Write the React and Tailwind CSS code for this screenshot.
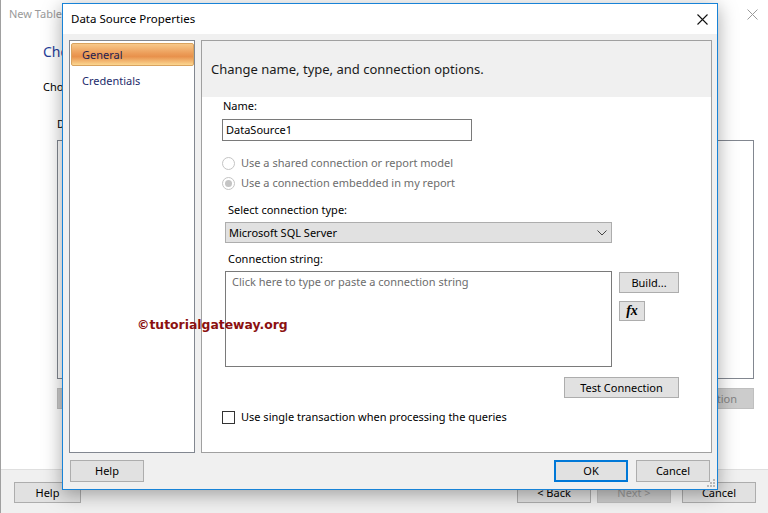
import React from "react";

const Btn = ({ children, className = "" }) => (
  <div className={"flex items-center justify-center bg-[#e1e1e1] border border-[#adadad] text-[11px] text-black " + className}>
    {children}
  </div>
);

const Radio = ({ checked, label }) => (
  <div className="flex items-center h-[20px]">
    <div className="w-[13px] h-[13px] rounded-full border border-[#c4c4c4] bg-white flex items-center justify-center">
      {checked && <div className="w-[7px] h-[7px] rounded-full bg-[#c4c4c4]" />}
    </div>
    <span className="ml-[6px] text-[11px] text-[#6d6d6d]">{label}</span>
  </div>
);

export default function App() {
  return (
    <div className="relative w-[768px] h-[513px] overflow-hidden bg-white font-['Noto_Sans',sans-serif] text-[11px] leading-[16px]">
      {/* Background wizard window */}
      <div className="flex flex-col w-full h-full border-l border-[#a0a0a0]">
        <div className="h-[28px] flex items-center justify-between pl-[8px] pr-[10px] text-[#9a9a9a]">
          <span>New Table or Matrix</span>
          <svg width="11" height="11" viewBox="0 0 11 11">
            <path d="M0.5 0.5 L10.5 10.5 M10.5 0.5 L0.5 10.5" stroke="#9a9a9a" strokeWidth="1" />
          </svg>
        </div>
        <div className="pl-[42px] mt-[14px] text-[14px] leading-[20px] text-[#1f3d99]">Choose a connection to a data source</div>
        <div className="pl-[42px] mt-[17px] text-black">Choose an existing data source or create a new one.</div>
        <div className="pl-[56px] mt-[21px] text-black">Data Source Connections</div>
        <div className="ml-[56px] mt-[8px] w-[697px] h-[239px] border border-[#828790] bg-white" />
        <div className="ml-[56px] mt-[9px] w-[697px] flex justify-between">
          <div className="w-[110px] h-[21px] bg-[#cccccc] border border-[#bfbfbf] text-[#838383] flex items-center justify-center">New</div>
          <div className="w-[110px] h-[21px] bg-[#cccccc] border border-[#bfbfbf] text-[#838383] flex items-center justify-end pr-[16px]">Test Connection</div>
        </div>
        <div className="mt-auto h-[44px] bg-[#f0f0f0] border-t border-[#dfdfdf] pt-[12px] flex">
          <Btn className="ml-[13px] w-[67px] h-[21px]">Help</Btn>
          <Btn className="ml-[436px] w-[74px] h-[21px]">&lt; Back</Btn>
          <div className="ml-[6px] w-[74px] h-[21px] bg-[#cccccc] border border-[#bfbfbf] text-[#9a9a9a] flex items-center justify-center">Next &gt;</div>
          <Btn className="ml-[11px] w-[74px] h-[21px]">Cancel</Btn>
        </div>
      </div>

      {/* Dialog window */}
      <div className="absolute left-[62px] top-[3px] w-[656px] h-[487px] border border-[#1883d7] bg-[#f0f0f0] shadow-[0_4px_18px_rgba(0,0,0,0.35)] flex flex-col">
        <div className="h-[30px] bg-white flex items-center justify-between pl-[8px] pr-[9px] shrink-0">
          <span className="text-black text-[11.5px]">Data Source Properties</span>
          <svg width="11" height="11" viewBox="0 0 11 11">
            <path d="M0.5 0.5 L10.5 10.5 M10.5 0.5 L0.5 10.5" stroke="#111" strokeWidth="1.1" />
          </svg>
        </div>
        <div className="flex flex-col pl-[6px] pr-[5px] pt-[6px]">
          <div className="flex gap-[6px]">
            {/* Nav */}
            <div className="w-[126px] h-[413px] border border-[#828790] bg-white pt-[2px]">
              <div className="ml-[1px] w-[123px] h-[23px] border border-[#d9a35f] rounded-[2px] bg-[linear-gradient(to_bottom,#f7c88a_0%,#ec9c58_45%,#e8914c_60%,#fbd690_100%)] flex items-center pl-[10px] text-[#1c2050]">
                General
              </div>
              <div className="mt-[3px] h-[23px] flex items-center pl-[12px] text-[#1c2b6b]">Credentials</div>
            </div>
            {/* Right panel */}
            <div className="w-[511px] h-[413px] border border-[#a0a0a0] bg-white flex flex-col">
              <div className="h-[56px] bg-[#f0f0f0] flex items-center pl-[9px] text-[13px] text-[#1a1a1a]">
                Change name, type, and connection options.
              </div>
              <div className="pl-[20px] flex flex-col items-start">
                <div className="ml-[1px] mt-[1px] text-black">Name:</div>
                <div className="mt-[5px] w-[250px] h-[22px] border border-[#7a7a7a] bg-white flex items-center pl-[3px] text-black">DataSource1</div>
                <div className="mt-[12px]">
                  <Radio label="Use a shared connection or report model" />
                  <Radio checked label="Use a connection embedded in my report" />
                </div>
                <div className="ml-[6px] mt-[9px] text-black">Select connection type:</div>
                <div className="ml-[3px] mt-[4px] w-[387px] h-[21px] bg-[#e1e1e1] border border-[#adadad] flex items-center justify-between pl-[3px] pr-[4px] text-black">
                  <span>Microsoft SQL Server</span>
                  <svg width="10" height="6" viewBox="0 0 10 6">
                    <path d="M0.5 0.5 L5 5 L9.5 0.5" stroke="#444" strokeWidth="1" fill="none" />
                  </svg>
                </div>
                <div className="ml-[6px] mt-[8px] text-black">Connection string:</div>
                <div className="ml-[3px] mt-[4px] flex">
                  <div className="w-[387px] h-[96px] border border-[#7a7a7a] bg-white pl-[6px] pt-[2px] text-[#6d6d6d]">
                    Click here to type or paste a connection string
                  </div>
                  <div className="ml-[7px] flex flex-col items-start">
                    <Btn className="mt-[1px] w-[60px] h-[21px]">Build...</Btn>
                    <Btn className="mt-[8px] w-[26px] h-[20px]">
                      <span className="font-['Liberation_Serif',serif] italic font-bold text-[14px]">fx</span>
                    </Btn>
                  </div>
                </div>
                <Btn className="ml-[342px] mt-[10px] w-[115px] h-[21px]">Test Connection</Btn>
                <div className="mt-[11px] flex items-center">
                  <div className="w-[13px] h-[13px] border border-[#333] bg-white" />
                  <span className="ml-[6px] text-black">Use single transaction when processing the queries</span>
                </div>
              </div>
            </div>
          </div>
          <div className="mt-[7px] flex">
            <Btn className="ml-[1px] w-[74px] h-[22px]">Help</Btn>
            <div className="ml-auto w-[74px] h-[22px] border-2 border-[#0078d7] bg-[#e1e1e1] flex items-center justify-center text-black">OK</div>
            <Btn className="ml-[8px] mr-[2px] w-[74px] h-[22px]">Cancel</Btn>
          </div>
        </div>
        <svg className="absolute right-[2px] bottom-[2px]" width="8" height="8" viewBox="0 0 8 8">
          <rect x="6" y="0" width="2" height="2" fill="#b8b8b8" />
          <rect x="3" y="3" width="2" height="2" fill="#b8b8b8" />
          <rect x="6" y="3" width="2" height="2" fill="#b8b8b8" />
          <rect x="0" y="6" width="2" height="2" fill="#b8b8b8" />
          <rect x="3" y="6" width="2" height="2" fill="#b8b8b8" />
          <rect x="6" y="6" width="2" height="2" fill="#b8b8b8" />
        </svg>
      </div>

      {/* Watermark */}
      <div className="absolute left-[137px] top-[317px] font-['DejaVu_Sans',sans-serif] font-bold text-[12.4px] leading-[16px] text-[#8b1010]">
        ©tutorialgateway.org
      </div>
    </div>
  );
}
